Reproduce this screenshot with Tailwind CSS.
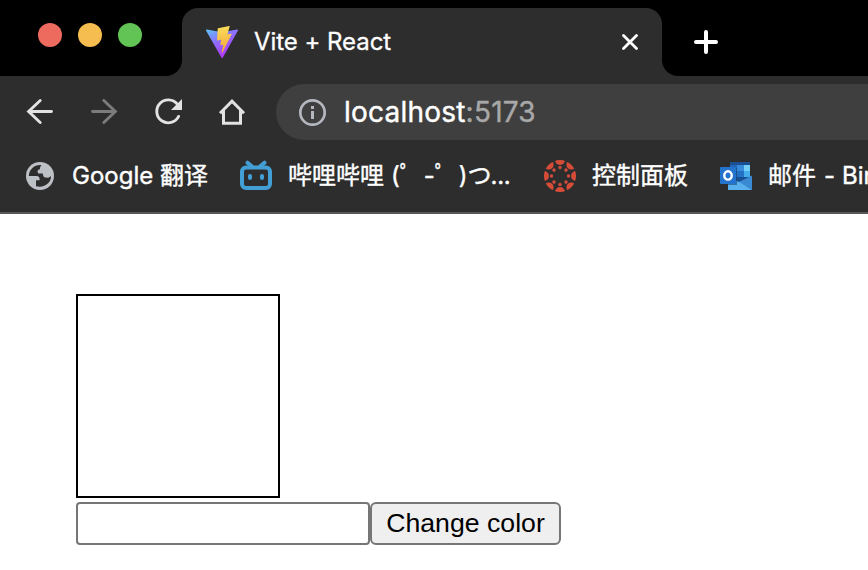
<!DOCTYPE html>
<html lang="zh">
<head>
<meta charset="utf-8">
<title>Vite + React</title>
<script src="https://cdn.jsdelivr.net/npm/@tailwindcss/browser@4"></script>
</head>
<body class="w-[868px] h-[570px] overflow-hidden bg-white text-white font-[Inter,'Noto_Sans_CJK_SC',sans-serif]">
<header class="h-[214px] bg-[#2d2d2d] border-b-2 border-[#5a5757] flex flex-col whitespace-nowrap overflow-hidden">
  <div class="h-[76px] shrink-0 flex bg-[#2d2d2d]">
    <div class="w-[182px] shrink-0 bg-black rounded-br-[16px] flex gap-4 pl-[38px] pt-[23px]">
      <span class="size-6 rounded-full bg-[#ed6a5e]"></span>
      <span class="size-6 rounded-full bg-[#f5bd4f]"></span>
      <span class="size-6 rounded-full bg-[#61c454]"></span>
    </div>
    <div class="w-[480px] shrink-0 bg-black pt-2">
      <div class="h-[68px] bg-[#2d2d2d] rounded-t-[16px] flex items-center pl-6 pr-6">
        <svg class="size-8" viewBox="2 2 28 28">
          <defs>
            <linearGradient id="v" x1="6" y1="3" x2="18" y2="27" gradientUnits="userSpaceOnUse"><stop stop-color="#5cc4f5"/><stop offset=".5" stop-color="#8b70ff"/><stop offset="1" stop-color="#b03cf8"/></linearGradient>
            <linearGradient id="b" x1="16" y1="3" x2="18.5" y2="24" gradientUnits="userSpaceOnUse"><stop stop-color="#fadb58"/><stop offset="1" stop-color="#f2a83a"/></linearGradient>
          </defs>
          <path fill="url(#v)" d="m29.884 6.146l-13.142 23.5a.714.714 0 0 1-1.244.005L2.096 6.148a.714.714 0 0 1 .746-1.057l13.156 2.352a.714.714 0 0 0 .253 0l12.881-2.348a.714.714 0 0 1 .752 1.05z"/>
          <path fill="url(#b)" d="M22.264 2.007l-9.726 1.906a.357.357 0 0 0-.288.329l-.598 10.104a.357.357 0 0 0 .437.369l2.708-.625a.357.357 0 0 1 .43.42l-.804 3.939a.357.357 0 0 0 .454.413l1.672-.508a.357.357 0 0 1 .454.414l-1.279 6.187c-.08.387.435.598.65.267l.143-.222l7.925-15.815a.357.357 0 0 0-.387-.51l-2.787.537a.357.357 0 0 1-.41-.45l1.819-6.305a.357.357 0 0 0-.413-.45z"/>
        </svg>
        <span class="ml-4 text-[24px] leading-8 tracking-[-0.05px] [-webkit-text-stroke:0.3px_#fff]">Vite + React</span>
        <svg class="size-4 ml-auto" viewBox="0 0 16 16" fill="none" stroke="#fff" stroke-width="2.8" stroke-linecap="round"><path d="M1.5 1.5l13 13M14.5 1.5l-13 13"/></svg>
      </div>
    </div>
    <div class="flex-1 bg-black rounded-bl-[16px] pl-8 pt-[30px]">
      <svg class="size-6" viewBox="0 0 24 24" fill="none" stroke="#fff" stroke-width="4" stroke-linecap="round"><path d="M12 2v20M2 12h20"/></svg>
    </div>
  </div>
  <div class="h-[72px] shrink-0 flex items-start pt-2">
    <div class="flex items-center h-14 w-[276px] shrink-0 pl-6 gap-8">
      <svg class="size-8" viewBox="0 0 32 32" fill="none" stroke="#e2e2e2" stroke-width="2.9" stroke-linecap="round"><path d="M27.5 15.5H5M16.2 4.5L4.6 15.5l11.6 11"/></svg>
      <svg class="size-8" viewBox="0 0 32 32" fill="none" stroke="#7c7c7c" stroke-width="2.9" stroke-linecap="round"><path d="M4.5 15.5h22.500M15.8 4.500L27.400 15.500 15.800 26.500"/></svg>
      <svg class="size-8" viewBox="0 0 32 32"><path d="M25.3 8.200A11.500 11.500 0 1 0 26.600 20.400" fill="none" stroke="#e2e2e2" stroke-width="2.9" stroke-linecap="round"/><path d="M30 3v11H19z" fill="#e2e2e2"/></svg>
      <svg class="size-8" viewBox="0 0 32 32" fill="none" stroke="#e2e2e2" stroke-width="3"><path d="M4 17.3L16 5.200l12 12.100M7.500 14v13.300h17V14"/></svg>
    </div>
    <div class="h-14 flex-1 bg-[#3f3f3f] rounded-l-full flex items-center pl-[22px]">
      <svg class="size-7" viewBox="0 0 28 28"><circle cx="14.5" cy="14.5" r="12.2" fill="none" stroke="#b4b8be" stroke-width="2.7"/><path d="M13 8h3v3h-3zM13 13h3v8h-3z" fill="#b4b8be"/></svg>
      <span class="ml-[18px] text-[28px] leading-9 tracking-[0.22px] [-webkit-text-stroke:0.4px_currentColor]">localhost<span class="text-[#a8a8a8]">:5173</span></span>
    </div>
  </div>
  <div class="h-14 shrink-0 flex items-center text-[24px] leading-8 [-webkit-text-stroke:0.4px_#fff]">
    <svg class="ml-6 size-8 shrink-0" viewBox="0 0 32 32"><circle cx="16" cy="16" r="14" fill="#bdc1c6"/><path fill="#2d2d2d" d="M17.500 5.100C10.500 4.300 5.200 9.200 4.800 16h8.200c2.200.2 2.700 1.800 2.600 4.200H12v6c8.200 2.200 15.200-3.200 15-10.200-1.500 1.700-3.300 2-5.300 1.600-2.400-.4-2.600-1.700-2.900-4.100h-4.500c-1.500-2.300-.4-4 1.600-4.200.1-2 .7-3.300 1.600-4.200z"/></svg>
    <div class="ml-4 w-[168px] shrink-0">Google 翻译</div>
    <svg class="size-8 shrink-0" viewBox="0 0 32 32" fill="none" stroke="#429fd5" stroke-width="4" stroke-linecap="round"><rect x="2" y="7.5" width="28" height="20.5" rx="4"/><path d="M7.5 2.7l4 3.3M24.500 2.700l-4 3.300"/><path d="M10 16v2M22 16v2"/></svg>
    <div class="ml-4 w-[256px] shrink-0 flex"><span>哔哩哔哩</span><span class="ml-[7px]">(</span><span class="w-[24px]">ﾟ</span><span>-</span><span class="w-[24px]">ﾟ</span><span>)<span class="tracking-[-1px]">つ</span><span class="tracking-[-0.3px]">...</span></span></div>
    <svg class="size-8 shrink-0" viewBox="0 0 32 32">
      <defs><clipPath id="c"><circle cx="16" cy="16" r="16"/></clipPath>
      <g id="p"><circle cx="16" cy="0" r="4.9" clip-path="url(#c)"/><circle cx="16" cy="7.500" r="1.700"/></g></defs>
      <g fill="#d64c38"><use href="#p"/><use href="#p" transform="rotate(45 16 16)"/><use href="#p" transform="rotate(90 16 16)"/><use href="#p" transform="rotate(135 16 16)"/><use href="#p" transform="rotate(180 16 16)"/><use href="#p" transform="rotate(225 16 16)"/><use href="#p" transform="rotate(270 16 16)"/><use href="#p" transform="rotate(315 16 16)"/></g>
    </svg>
    <div class="ml-4 w-[128px] shrink-0">控制面板</div>
    <svg class="size-8 shrink-0" viewBox="0 0 32 32">
      <path fill="#2166b8" d="M10 2h20v18H10z"/><path fill="#1b4f94" d="M10 2h20v3H10z"/><path fill="#368cdb" d="M17 5h7v6h-7z"/><path fill="#74d0fa" d="M24 5h6v6h-6z"/><path fill="#45ade9" d="M24 11h6v6h-6z"/><path fill="#2370c4" d="M17 11h7v6h-7z"/><path fill="#175193" d="M10 17h20v5H10z"/>
      <path fill="#3989d3" d="M32 15.500V30L18 22.500z"/><path fill="#58b1ed" d="M8 17l12 5.500L32 30H8z"/>
      <path fill="#163c69" opacity=".55" d="M8 8h9v17H8z"/><rect y="7" width="16" height="17" rx="1" fill="#2474cd"/><ellipse cx="8" cy="15.400" rx="3.700" ry="4.200" fill="none" stroke="#fff" stroke-width="2.400"/>
    </svg>
    <div class="ml-4 shrink-0 flex"><span>邮件</span><span class="ml-2 w-[18px]">-</span><span>Bing</span></div>
  </div>
</header>
<main class="pl-[76px] pt-20 text-black font-['Liberation_Sans',Arial,sans-serif]">
  <div class="size-[204px] border-2 border-black"></div>
  <div class="mt-1 flex">
    <input aria-label="color" class="w-[294px] h-[43px] border-2 border-[#767676] rounded-[4px] bg-white">
    <button class="w-[191px] h-[43px] border-2 border-[#767676] rounded-[6px] bg-[#efefef] text-[26.67px] leading-none whitespace-nowrap">Change color</button>
  </div>
</main>
</body>
</html>
